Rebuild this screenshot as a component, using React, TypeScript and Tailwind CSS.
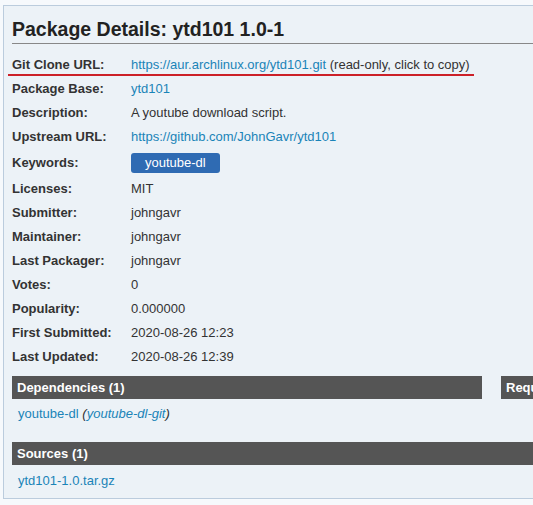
import React from "react";

type Row = { label: string; value: React.ReactNode };

const link = "text-[#1a84b8]";

const rows: Row[] = [
  {
    label: "Git Clone URL:",
    value: (
      <>
        <span className={link}>https://aur.archlinux.org/ytd101.git</span> (read-only, click to copy)
      </>
    ),
  },
  { label: "Package Base:", value: <span className={link}>ytd101</span> },
  { label: "Description:", value: "A youtube download script." },
  { label: "Upstream URL:", value: <span className={link}>https://github.com/JohnGavr/ytd101</span> },
  {
    label: "Keywords:",
    value: (
      <span className="inline-block rounded-[3px] bg-[#2f6bb3] px-[14px] leading-[20px] text-white">
        youtube-dl
      </span>
    ),
  },
  { label: "Licenses:", value: "MIT" },
  { label: "Submitter:", value: "johngavr" },
  { label: "Maintainer:", value: "johngavr" },
  { label: "Last Packager:", value: "johngavr" },
  { label: "Votes:", value: "0" },
  { label: "Popularity:", value: "0.000000" },
  { label: "First Submitted:", value: "2020-08-26 12:23" },
  { label: "Last Updated:", value: "2020-08-26 12:39" },
];

export default function App() {
  return (
    <div
      className="h-[505px] w-[533px] overflow-hidden bg-[#f6f9fc] pl-[3px] pt-[5px] text-[13px] text-[#333]"
      style={{ fontFamily: '"Liberation Sans", Arial, sans-serif' }}
    >
      <div className="w-[1000px] border border-[#bbccdd] bg-[#ecf2f7] pb-[5px] pl-[8px]">
        <h2 className="mt-[11px] border-b border-[#888] pb-[2px] text-[19.5px] font-bold leading-[24px] text-[#222]">
          Package Details: ytd101 1.0-1
        </h2>

        <div className="mt-[9px]">
          {rows.map((r, i) => (
            <div
              key={r.label}
              className={`relative grid grid-cols-[119px_1fr] items-center ${
                r.label === "Keywords:" ? "h-[28px]" : "h-[24px]"
              }`}
            >
              <div className="font-bold leading-[24px]">{r.label}</div>
              <div className="leading-[24px]">{r.value}</div>
              {i === 0 && (
                <div className="absolute left-[-4px] top-[21px] h-[2px] w-[466px] bg-[#cc2028]" />
              )}
            </div>
          ))}
        </div>

        <div className="mt-[7px] flex gap-[19px]">
          <div className="w-[470px]">
            <div className="bg-[#555] px-[5px] text-[13px] font-bold leading-[23px] text-white">
              Dependencies (1)
            </div>
            <div className="pl-[6px] pt-[3px] leading-[24px]">
              <span className={link}>youtube-dl</span>{" "}
              <em>
                (<span className={link}>youtube-dl-git</span>)
              </em>
            </div>
          </div>
          <div className="w-[470px]">
            <div className="bg-[#555] px-[5px] text-[13px] font-bold leading-[23px] text-white">
              Required by (0)
            </div>
          </div>
        </div>

        <div className="mt-[16px]">
          <div className="bg-[#555] px-[5px] text-[13px] font-bold leading-[23px] text-white">
            Sources (1)
          </div>
          <div className="pl-[6px] pt-[4px] leading-[24px]">
            <span className={link}>ytd101-1.0.tar.gz</span>
          </div>
        </div>
      </div>
    </div>
  );
}
